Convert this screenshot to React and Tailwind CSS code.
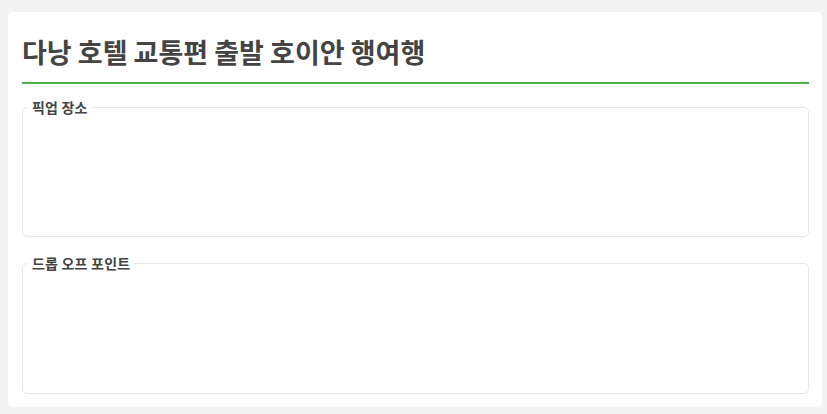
export default function App() {
  const font = { fontFamily: '"Noto Sans CJK KR", "Noto Sans", sans-serif' };
  return (
    <div className="min-h-[414px] w-full bg-[#f3f3f3] pl-[8px] pr-[5px] pt-[12px] pb-[8px]" style={font}>
      <div className="flex flex-col rounded-[5px] bg-white pl-[14px] pr-[13px] pt-[20px] pb-[13px]">
        <h2 className="border-b-2 border-[#4caf50] pb-[10px] text-[27px] font-bold leading-[40px] text-[#444444]">
          다낭 호텔 교통편 출발 호이안 행여행
        </h2>
        <fieldset className="mt-[15px] h-[138px] rounded-[5px] border border-[#e6e6e6] px-[5px]">
          <legend className="px-[4px] text-[14px] font-semibold leading-[16px] tracking-[0.2px] text-[#444444]">픽업 장소</legend>
        </fieldset>
        <fieldset className="mt-[18px] h-[139px] rounded-[5px] border border-[#e6e6e6] px-[5px]">
          <legend className="px-[4px] text-[14px] font-semibold leading-[16px] tracking-[0.2px] text-[#444444]">드롭 오프 포인트</legend>
        </fieldset>
      </div>
    </div>
  );
}
